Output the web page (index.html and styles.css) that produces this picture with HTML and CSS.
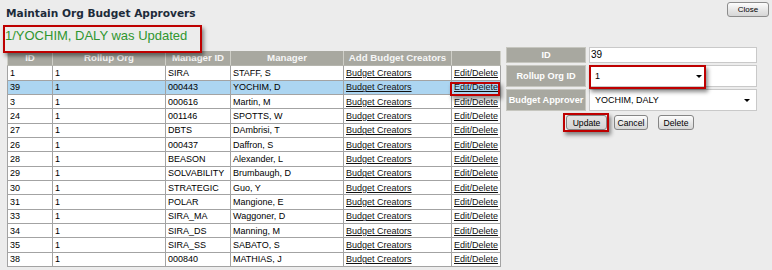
FILE: index.html
```html
<!DOCTYPE html>
<html>
<head>
<meta charset="utf-8">
<link rel="stylesheet" href="styles.css">
</head>
<body>
<div class="page">
  <div class="top">
    <h1 class="title">Maintain Org Budget Approvers</h1>
    <button class="btn close">Close</button>
  </div>
  <div class="main">
    <div class="left">
      <div class="msg hl">1/YOCHIM, DALY was Updated</div>
      <table class="grid">
        <colgroup>
          <col class="c-id"><col class="c-roll"><col class="c-mid"><col class="c-mgr"><col class="c-add"><col class="c-edit">
        </colgroup>
        <thead>
          <tr><th>ID</th><th>Rollup Org</th><th>Manager ID</th><th>Manager</th><th>Add Budget Creators</th><th></th></tr>
        </thead>
        <tbody>
          <tr><td>1</td><td>1</td><td>SIRA</td><td>STAFF, S</td><td><a href="#">Budget Creators</a></td><td><a href="#">Edit/Delete</a></td></tr>
          <tr class="sel"><td>39</td><td>1</td><td>000443</td><td>YOCHIM, D</td><td><a href="#">Budget Creators</a></td><td class="hl-cell"><a href="#">Edit/Delete</a></td></tr>
          <tr><td>3</td><td>1</td><td>000616</td><td>Martin, M</td><td><a href="#">Budget Creators</a></td><td><a href="#">Edit/Delete</a></td></tr>
          <tr><td>24</td><td>1</td><td>001146</td><td>SPOTTS, W</td><td><a href="#">Budget Creators</a></td><td><a href="#">Edit/Delete</a></td></tr>
          <tr><td>27</td><td>1</td><td>DBTS</td><td>DAmbrisi, T</td><td><a href="#">Budget Creators</a></td><td><a href="#">Edit/Delete</a></td></tr>
          <tr><td>26</td><td>1</td><td>000437</td><td>Daffron, S</td><td><a href="#">Budget Creators</a></td><td><a href="#">Edit/Delete</a></td></tr>
          <tr><td>28</td><td>1</td><td>BEASON</td><td>Alexander, L</td><td><a href="#">Budget Creators</a></td><td><a href="#">Edit/Delete</a></td></tr>
          <tr><td>29</td><td>1</td><td>SOLVABILITY</td><td>Brumbaugh, D</td><td><a href="#">Budget Creators</a></td><td><a href="#">Edit/Delete</a></td></tr>
          <tr><td>30</td><td>1</td><td>STRATEGIC</td><td>Guo, Y</td><td><a href="#">Budget Creators</a></td><td><a href="#">Edit/Delete</a></td></tr>
          <tr><td>31</td><td>1</td><td>POLAR</td><td>Mangione, E</td><td><a href="#">Budget Creators</a></td><td><a href="#">Edit/Delete</a></td></tr>
          <tr><td>33</td><td>1</td><td>SIRA_MA</td><td>Waggoner, D</td><td><a href="#">Budget Creators</a></td><td><a href="#">Edit/Delete</a></td></tr>
          <tr><td>34</td><td>1</td><td>SIRA_DS</td><td>Manning, M</td><td><a href="#">Budget Creators</a></td><td><a href="#">Edit/Delete</a></td></tr>
          <tr><td>35</td><td>1</td><td>SIRA_SS</td><td>SABATO, S</td><td><a href="#">Budget Creators</a></td><td><a href="#">Edit/Delete</a></td></tr>
          <tr><td>38</td><td>1</td><td>000840</td><td>MATHIAS, J</td><td><a href="#">Budget Creators</a></td><td><a href="#">Edit/Delete</a></td></tr>
        </tbody>
      </table>
    </div>
    <div class="right">
      <table class="form">
        <tr class="r1">
          <td class="lbl">ID</td>
          <td class="val"><div class="txt">39</div></td>
        </tr>
        <tr class="r2">
          <td class="lbl">Rollup Org ID</td>
          <td class="val"><div class="select short hl">1<span class="arrow"></span></div></td>
        </tr>
        <tr class="r3">
          <td class="lbl">Budget Approver</td>
          <td class="val"><div class="select wide">YOCHIM, DALY<span class="arrow"></span></div></td>
        </tr>
      </table>
      <div class="actions">
        <button class="btn act update hl">Update</button>
        <button class="btn act cancel">Cancel</button>
        <button class="btn act delete">Delete</button>
      </div>
    </div>
  </div>
</div>
</body>
</html>
```

FILE: styles.css
```css
html, body {
  margin: 0;
  padding: 0;
}
body {
  background: #ececec;
  font-family: "Liberation Sans", Arial, sans-serif;
  color: #000;
  width: 772px;
  height: 270px;
  overflow: hidden;
}
.top {
  display: flex;
  justify-content: space-between;
  align-items: flex-start;
  height: 25px;
  box-sizing: border-box;
  padding: 2px 3px 0 6px;
}
.title {
  margin: 4px 0 0;
  font: bold 10.6px/14px "DejaVu Sans", "Liberation Sans", sans-serif;
  color: #1d2b3a;
}
.btn {
  font-family: "Liberation Sans", Arial, sans-serif;
  color: #000;
  border: 1px solid #858585;
  border-radius: 3px;
  background: linear-gradient(#fdfdfd, #e6e6e6 55%, #d6d6d6);
  padding: 0;
  margin: 0;
}
.close {
  width: 42px;
  height: 15px;
  font-size: 8px;
  border-color: #8c8c8c;
}
.main {
  display: flex;
  align-items: flex-start;
}
.left {
  margin-left: 3px;
  width: 497px;
}
.hl {
  position: relative;
}
.hl::after {
  content: "";
  position: absolute;
  border: 2px solid #be0000;
  box-shadow: 2px 3px 4px rgba(0, 0, 0, 0.45);
  pointer-events: none;
}
.msg {
  width: 199px;
  height: 25.5px;
  box-sizing: border-box;
  padding: 3px 0 0 2px;
  font-size: 13px;
  line-height: 16px;
  color: #2f962f;
}
.msg::after {
  left: 0;
  top: 0;
  right: 0;
  bottom: -2.5px;
}
.grid {
  margin-left: 4px;
  width: 493px;
  border-collapse: collapse;
  table-layout: fixed;
  font-size: 9px;
  background: #fff;
}
.c-id { width: 45px; }
.c-roll { width: 113px; }
.c-mid { width: 65px; }
.c-mgr { width: 113px; }
.c-add { width: 108px; }
.c-edit { width: 49px; }
.grid th {
  background: #a8a8a0;
  color: #f6f6f6;
  font-size: 9.7px;
  font-weight: bold;
  height: 13.8px;
  padding: 0;
  border: 1px solid #cfcfc8;
  border-bottom-color: #b5b5ae;
  border-top-color: #a8a8a0;
  text-align: center;
  white-space: nowrap;
  line-height: 12px;
}
.grid tbody tr {
  height: 14.33px;
}
.grid td {
  padding: 0 0 0 2px;
  border: 1px solid #a3a3a3;
  line-height: 12px;
  white-space: nowrap;
  overflow: visible;
}
.grid tr.sel td {
  background: #acd5f1;
}
.grid a {
  color: #111;
  text-decoration: underline;
}
.hl-cell {
  position: relative;
}
.hl-cell::after {
  content: "";
  position: absolute;
  left: -2px;
  top: 1px;
  right: 0;
  bottom: -2px;
  border: 2px solid #be0000;
  box-shadow: 2px 3px 4px rgba(0, 0, 0, 0.45);
}
.right {
  margin-left: 3px;
  margin-top: 20px;
}
.form {
  border-collapse: separate;
  border-spacing: 3px 2.5px;
}
.form td {
  padding: 0;
  box-sizing: border-box;
}
.form .lbl {
  width: 80px;
  background: #a8a8a0;
  border: 1px solid #c6c6bf;
  color: #fff;
  font-weight: bold;
  font-size: 9.2px;
  text-align: center;
  white-space: nowrap;
}
.form .val {
  width: 168px;
  background: #fff;
  border: 1px solid #c9c9c9;
  vertical-align: top;
}
.form .r1 td { height: 16px; }
.form .r2 td { height: 22px; }
.form .r3 td { height: 22px; }
.txt {
  font-size: 10px;
  line-height: 14px;
  padding-left: 1px;
}
.select {
  display: flex;
  align-items: center;
  font-size: 9px;
  box-sizing: border-box;
  background: #fff;
}
.select.short {
  width: 115px;
  height: 20px;
  padding-left: 5px;
}
.select.short::after {
  left: -1px;
  top: -1px;
  right: -1px;
  bottom: -3px;
}
.select.wide {
  height: 20px;
  padding-left: 5px;
}
.arrow {
  margin-left: auto;
  width: 0;
  height: 0;
  border-left: 3px solid transparent;
  border-right: 3px solid transparent;
  border-top: 3px solid #000;
}
.short .arrow { margin-right: 3px; }
.wide .arrow { margin-right: 6px; }
.actions {
  display: flex;
  justify-content: center;
  margin-top: 2px;
  padding-right: 3px;
}
.act {
  height: 15px;
  font-size: 8.6px;
}
.update {
  width: 41px;
  background: linear-gradient(#e4e4e4, #d4d4d4);
}
.update::after {
  left: -4px;
  top: -3px;
  right: -3px;
  bottom: -3px;
}
.cancel {
  width: 34px;
  margin-left: 7px;
}
.delete {
  width: 36px;
  margin-left: 10px;
}
```
